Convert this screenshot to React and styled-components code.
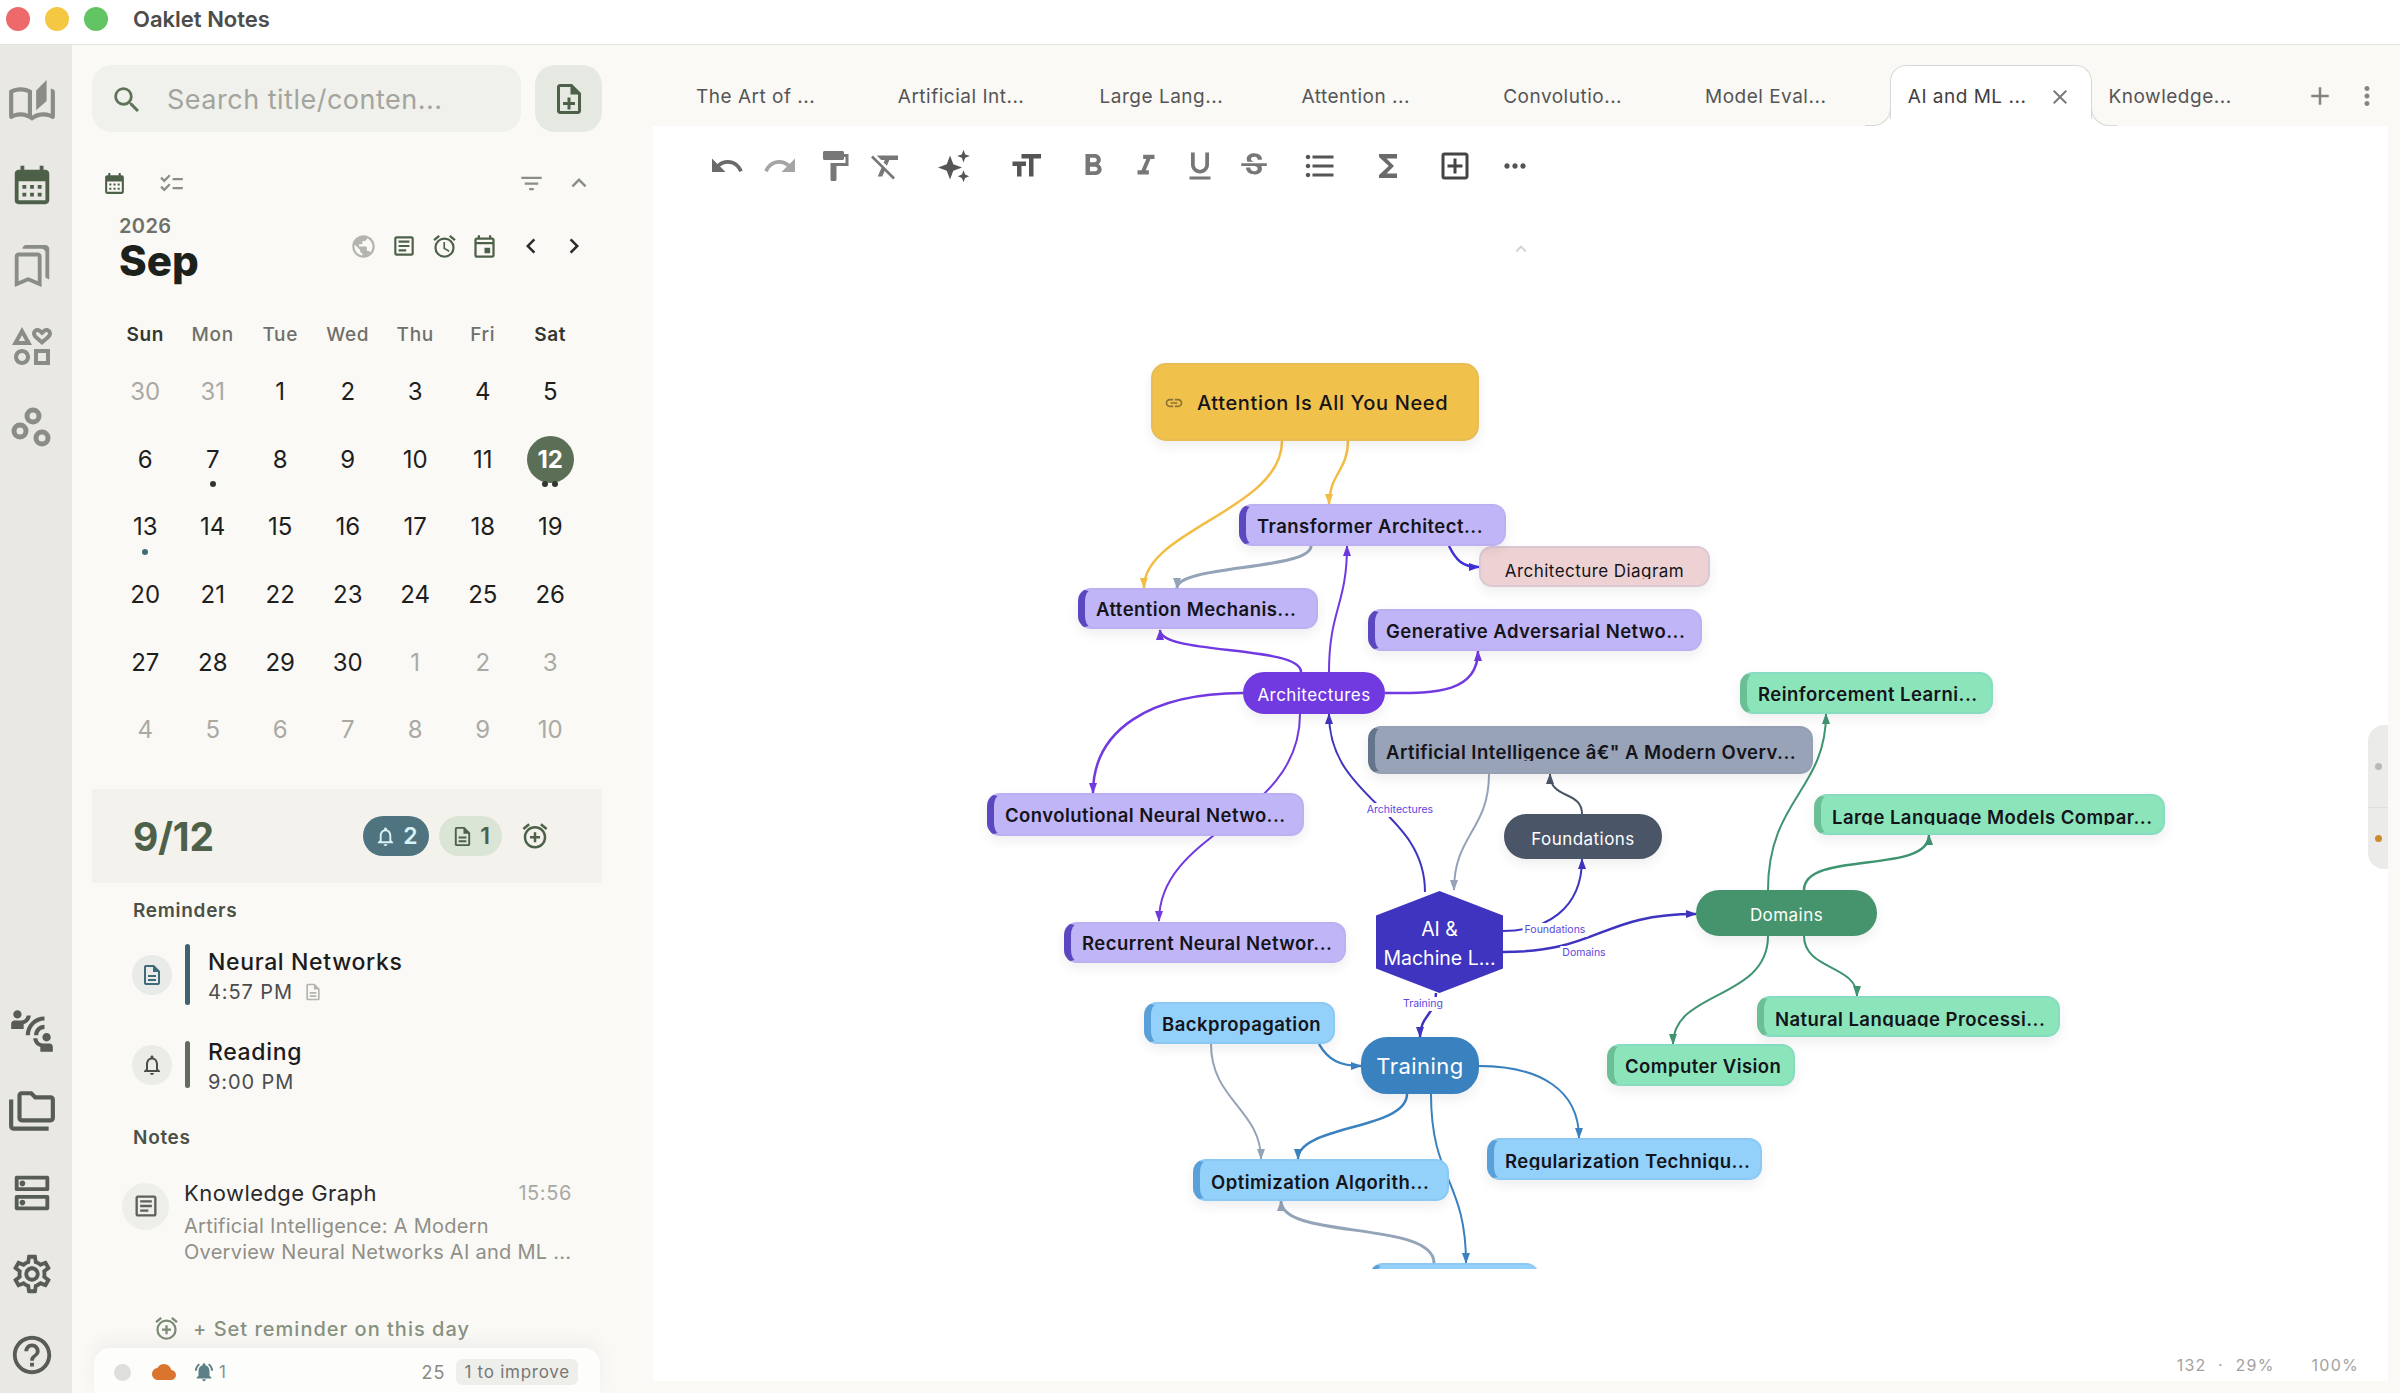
import React from 'react'
import styled, { createGlobalStyle } from 'styled-components'
import {
  MdAdd, MdCalendarMonth, MdChecklist, MdChevronLeft, MdChevronRight, MdClose, MdCloud,
  MdConnectWithoutContact, MdFilterList, MdFormatBold, MdFormatClear, MdFormatItalic,
  MdFormatListBulleted, MdFormatPaint, MdFormatSize, MdFormatUnderlined, MdFunctions,
  MdKeyboardArrowUp, MdLink, MdMoreHoriz, MdMoreVert, MdNotificationsActive, MdOutlineAddBox,
  MdOutlineAlarm, MdOutlineAlarmAdd, MdOutlineArticle, MdOutlineAutoStories, MdOutlineBookmarks,
  MdOutlineDescription, MdOutlineDns, MdOutlineEvent, MdOutlineFolderCopy,
  MdOutlineHelpOutline, MdOutlineInterests, MdOutlineNoteAdd, MdOutlineNotifications,
  MdOutlineSettings, MdPublic, MdRedo, MdSearch, MdStrikethroughS, MdUndo,
} from 'react-icons/md'

const GlobalStyle = createGlobalStyle`
  html, body {
    margin: 0;
    height: 100%;
    background: #faf9f6;
  }
  * {
    box-sizing: border-box;
  }
  body {
    font-family: Inter, "Liberation Sans", sans-serif;
  }
`

const Window = styled.div`
  display: flex;
  flex-direction: column;
  width: 2400px;
  height: 1393px;
  overflow: hidden;
`

const TitleBar = styled.header`
  display: flex;
  align-items: center;
  height: 45px;
  padding: 0 0 7px 6px;
  background: #fff;
  border-bottom: 1px solid #e2e2e0;
`

const Light = styled.span`
  width: 24px;
  height: 24px;
  margin-right: 15px;
  border-radius: 50%;
  background: ${props => props.$color};
`

const AppName = styled.div`
  margin-left: 10px;
  font-size: 22px;
  font-weight: 600;
  color: #4c4c4a;
`

const Body = styled.div`
  display: flex;
  flex: 1;
  min-height: 0;
`

const Rail = styled.nav`
  display: flex;
  flex-direction: column;
  justify-content: space-between;
  width: 72px;
  margin-bottom: -2px;
  padding: 18px 8px 0 0;
  background: #e9e8e4;
`

const RailGroup = styled.div`
  display: flex;
  flex-direction: column;
`

const RailItem = styled.div`
  display: flex;
  align-items: center;
  justify-content: center;
  height: 81px;
  font-size: ${props => props.$size || 46}px;
  color: ${props => props.$color};
`

const Panel = styled.aside`
  flex: none;
  width: 581px;
  padding: 20px 0 0 20px;
  overflow: hidden;
`

const PanelInner = styled.div`
  width: 510px;
`

const SearchRow = styled.div`
  display: flex;
  gap: 14px;
  height: 67px;
`

const SearchBox = styled.div`
  display: flex;
  flex: 1;
  align-items: center;
  gap: 23px;
  padding: 2px 0 0 18px;
  font-size: 27px;
  letter-spacing: 0.5px;
  color: #a3a49d;
  background: #f0f1ec;
  border-radius: 20px;
  svg {
    flex: none;
    font-size: 34px;
    color: #5f7359;
  }
`

const NewButton = styled.div`
  display: flex;
  align-items: center;
  justify-content: center;
  width: 67px;
  font-size: 36px;
  color: #4d6148;
  background: #e6e8e2;
  border-radius: 20px;
`

const CalTools = styled.div`
  display: flex;
  align-items: center;
  height: 30px;
  margin-top: 36px;
  padding: 0 8px 0 10px;
  color: #8a8c86;
`

const ToolIcon = styled.span`
  display: flex;
  margin-right: ${props => props.$mr || 0}px;
  margin-left: ${props => (props.$push ? 'auto' : '0')};
  font-size: ${props => props.$size}px;
  color: ${props => props.$color || 'inherit'};
`

const MonthHead = styled.div`
  display: flex;
  align-items: center;
  margin-top: 15px;
  padding: 0 13px 0 27px;
`

const MonthTitle = styled.div`
  flex: 1;
`

const MonthTools = styled.div`
  display: flex;
  align-items: center;
  padding-bottom: 6px;
`

const Year = styled.div`
  padding-top: 1px;
  font-size: 20px;
  font-weight: 600;
  line-height: 24px;
  letter-spacing: 0.4px;
  color: #6f706a;
`

const Month = styled.div`
  height: 47px;
  font-size: 42px;
  font-weight: 800;
  line-height: 46px;
  color: #1c211c;
`

const CalGrid = styled.div`
  display: grid;
  grid-template-columns: repeat(7, 67.5px);
  width: 473px;
  margin: 34px 0 0 19.5px;
`

const WeekDay = styled.div`
  height: 39px;
  padding-top: 3px;
  font-size: 19px;
  font-weight: ${props => (props.$strong ? 600 : 500)};
  line-height: 26px;
  letter-spacing: 0.7px;
  text-align: center;
  color: ${props => (props.$strong ? '#33362f' : '#6f706a')};
`

const DayCell = styled.div`
  position: relative;
  display: flex;
  align-items: center;
  justify-content: center;
  height: 67.6px;
  font-size: 24px;
  color: ${props => (props.$muted ? '#aaaaa4' : '#1e1e1e')};
`

const Today = styled.span`
  display: flex;
  align-items: center;
  justify-content: center;
  width: 47px;
  height: 47px;
  font-weight: 700;
  color: #fff;
  background: #5a6f55;
  border-radius: 50%;
`

const Dots = styled.div`
  position: absolute;
  top: calc(50% + 22px);
  left: 0;
  right: 0;
  display: flex;
  justify-content: center;
  gap: 4px;
`

const Dot = styled.i`
  width: 6px;
  height: 6px;
  border-radius: 50%;
  background: ${props => props.$color};
`

const DayBanner = styled.section`
  display: flex;
  align-items: center;
  height: 94px;
  margin-top: 25px;
  padding: 1px 52px 0 41px;
  background: #f3f2ed;
`

const DayTitle = styled.div`
  flex: 1;
  font-size: 39px;
  font-weight: 700;
  letter-spacing: -0.3px;
  color: #4d6148;
`

const CountPill = styled.div`
  display: flex;
  align-items: center;
  justify-content: center;
  gap: 6px;
  width: ${props => props.$w}px;
  height: 40px;
  margin-right: ${props => props.$mr}px;
  font-size: 23px;
  font-weight: 600;
  color: ${props => props.$fg};
  background: ${props => props.$bg};
  border-radius: 20px;
`

const SectionLabel = styled.h3`
  margin: ${props => props.$top}px 0 0 41px;
  font-size: 19px;
  font-weight: 600;
  line-height: 24px;
  letter-spacing: 0.7px;
  color: #4a5048;
`

const ReminderList = styled.div`
  display: flex;
  flex-direction: column;
  gap: 30px;
  margin: 22px 0 0 40px;
`

const Reminder = styled.div`
  display: flex;
  align-items: center;
  height: 60px;
`

const RoundIcon = styled.span`
  display: flex;
  align-items: center;
  justify-content: center;
  flex: none;
  width: ${props => props.$d}px;
  height: ${props => props.$d}px;
  font-size: ${props => props.$size}px;
  color: ${props => props.$color};
  background: ${props => props.$bg};
  border-radius: 50%;
`

const Bar = styled.span`
  flex: none;
  width: 5px;
  height: ${props => props.$h}px;
  margin: 0 18px 0 13px;
  background: ${props => props.$color};
  border-radius: 3px;
`

const ReminderText = styled.div`
  padding-top: 2px;
`

const ReminderTitle = styled.div`
  font-size: 23px;
  font-weight: 500;
  line-height: 32px;
  letter-spacing: 0.65px;
  color: #1c1c1c;
`

const ReminderTime = styled.div`
  display: flex;
  align-items: center;
  gap: 10px;
  font-size: 20px;
  line-height: 28px;
  letter-spacing: 0.9px;
  color: #4c4c4c;
  svg {
    font-size: 20px;
    color: #b5b5b0;
  }
`

const NoteRow = styled.div`
  display: flex;
  gap: 15px;
  margin: 28px 0 0 30px;
`

const NoteIcon = styled(RoundIcon)`
  margin-top: 5px;
`

const NoteBody = styled.div`
  width: 388px;
`

const NoteHead = styled.div`
  display: flex;
  justify-content: space-between;
  align-items: center;
  height: 30px;
  font-size: 22px;
  letter-spacing: 0.45px;
  color: #2a2a2a;
`

const NoteTime = styled.span`
  font-size: 20px;
  letter-spacing: 0.6px;
  color: #a9a9a3;
`

const NoteText = styled.p`
  margin: 5px 0 0;
  font-size: 20px;
  line-height: 26px;
  letter-spacing: 0.26px;
  white-space: nowrap;
  color: #8f8f88;
`

const SetReminder = styled.div`
  display: flex;
  align-items: center;
  gap: 13px;
  height: 24px;
  margin: 52px 0 0 61px;
  font-size: 20px;
  font-weight: 500;
  letter-spacing: 1px;
  color: #869180;
  svg {
    font-size: 27px;
    color: #7a8a74;
  }
`

const StatusBar = styled.footer`
  display: flex;
  align-items: center;
  width: 506px;
  height: 46px;
  margin: 7px 0 0 2px;
  padding: 3px 22px 0 20px;
  font-size: 18px;
  color: #8a8a85;
  background: #fdfdfb;
  border-radius: 16px 16px 0 0;
  box-shadow: 0 -6px 16px rgba(120, 120, 110, 0.08);
`

const StatusDot = styled.span`
  width: 17px;
  height: 17px;
  margin-right: 21px;
  background: #dededc;
  border-radius: 50%;
`

const StatusCount = styled.span`
  display: flex;
  align-items: center;
  gap: 4px;
  margin-left: 17px;
  font-size: 17px;
  color: #7d9098;
  svg {
    font-size: 22px;
    color: #5d8088;
  }
`

const Improve = styled.span`
  height: 26px;
  margin-left: 11px;
  padding: 0 8px;
  font-size: 17px;
  line-height: 26px;
  letter-spacing: 0.75px;
  color: #777;
  background: #eeeeea;
  border-radius: 6px;
`

const Score = styled.span`
  margin-left: auto;
  letter-spacing: 1px;
`

const Main = styled.main`
  display: flex;
  flex: 1;
  flex-direction: column;
  min-width: 0;
  padding: 0 12px 12px 0;
`

const TabBar = styled.div`
  display: flex;
  align-items: flex-end;
  height: 81px;
  padding-left: 26px;
`

const Tab = styled.div`
  position: relative;
  display: flex;
  align-items: center;
  justify-content: space-between;
  width: 201.8px;
  height: 61px;
  padding: 1px 19px 0 17px;
  font-size: 19px;
  letter-spacing: 0.5px;
  color: ${props => (props.$active ? '#3f3f3f' : '#555')};
  ${props => props.$active && `
    z-index: 1;
    background: #fff;
    border: 1px solid #d8d8d6;
    border-bottom: 0;
    border-radius: 16px 16px 0 0;
    &::before, &::after {
      content: '';
      position: absolute;
      bottom: 0;
      width: 25px;
      height: 18px;
      border-bottom: 1px solid #d8d8d6;
    }
    &::before {
      left: -26px;
      border-right: 1px solid #d8d8d6;
      border-bottom-right-radius: 18px;
      box-shadow: 12px 12px 0 #fff;
    }
    &::after {
      right: -26px;
      border-left: 1px solid #d8d8d6;
      border-bottom-left-radius: 18px;
      box-shadow: -12px 12px 0 #fff;
    }
  `}
  svg {
    flex: none;
    font-size: 24px;
    color: #7a7a7a;
  }
`

const TabActions = styled.div`
  display: flex;
  align-items: center;
  height: 61px;
  margin-left: 12px;
  font-size: 30px;
  color: #85857f;
  svg:last-child {
    margin-left: 17px;
  }
`

const Editor = styled.div`
  position: relative;
  display: flex;
  flex: 1;
  flex-direction: column;
  min-height: 0;
  background: #fff;
`

const Toolbar = styled.div`
  display: flex;
  align-items: center;
  height: 80px;
  padding-left: 56px;
`

const ToolButton = styled.span`
  display: flex;
  align-items: center;
  justify-content: center;
  flex: none;
  width: 36px;
  margin-left: ${props => props.$ml}px;
  font-size: ${props => props.$size || 34}px;
  color: ${props => props.$color || '#6a6a6a'};
`

const CaretRow = styled.div`
  display: flex;
  align-items: center;
  height: 86px;
  padding-left: 857px;
  font-size: 22px;
  color: #d2d2d0;
`

const Canvas = styled.div`
  position: relative;
  flex: none;
  height: 977px;
  overflow: hidden;
`

const Edges = styled.svg`
  position: absolute;
  top: 0;
  left: 0;
`

const Node = styled.div`
  position: absolute;
  left: ${props => props.$x - OX}px;
  top: ${props => props.$y - OY}px;
  display: flex;
  align-items: center;
  justify-content: ${props => (props.$hub ? 'center' : 'flex-start')};
  width: ${props => props.$w}px;
  height: ${props => props.$h}px;
  padding-top: ${props => props.$pt ?? 2}px;
  padding-left: ${props => (props.$hub ? 0 : 11)}px;
  font-size: ${props => props.$font || 18.5}px;
  font-weight: ${props => props.$weight || 600};
  letter-spacing: ${props => props.$track || 0.45}px;
  white-space: nowrap;
  color: ${props => props.$fg || '#14141a'};
  background: ${props => props.$bg};
  border: 2px solid ${props => props.$line || props.$bg};
  border-left: ${props => (props.$bar ? `7px solid ${props.$bar}` : `2px solid ${props.$line || props.$bg}`)};
  border-radius: ${props => props.$radius || 13}px;
  box-shadow: 0 5px 12px rgba(40, 40, 60, 0.08);
`

const NodeLabel = styled.span`
  display: block;
  overflow: hidden;
  height: ${props => (props.$clip ? '1.06em' : 'auto')};
  line-height: ${props => (props.$clip ? '1.2' : '1.3')};
`

const Hexagon = styled.div`
  position: absolute;
  left: ${1376 - 653}px;
  top: ${891 - 292}px;
  display: flex;
  flex-direction: column;
  align-items: center;
  justify-content: center;
  width: 127px;
  height: 102px;
  padding-top: 3px;
  font-size: 19.5px;
  line-height: 29px;
  color: #fff;
  background: #3f34bf;
  clip-path: polygon(50% 0, 100% 24%, 100% 76%, 50% 100%, 0 76%, 0 24%);
`

const EdgeLabel = styled.span`
  position: absolute;
  left: ${props => props.$x - OX}px;
  top: ${props => props.$y - OY}px;
  padding: 0 2px;
  font-size: 10.5px;
  line-height: 14px;
  white-space: nowrap;
  color: #5b46e0;
  background: #fff;
  transform: translate(-50%, -50%);
`

const ZoomInfo = styled.div`
  display: flex;
  justify-content: flex-end;
  gap: 37px;
  margin-top: auto;
  padding: 0 29px 6px 0;
  font-size: 16px;
  letter-spacing: 1.25px;
  color: #a2a2a0;
`

const SideTabs = styled.div`
  position: absolute;
  top: ${725 - 126}px;
  right: 0;
  display: flex;
  flex-direction: column;
  width: 20px;
  height: 144px;
  background: #ebebe9;
  border-radius: 16px 0 0 16px;
`

const SideTab = styled.div`
  display: flex;
  align-items: center;
  justify-content: center;
  height: ${props => props.$h}px;
  & + & {
    border-top: 1px solid #dddddb;
  }
`

const SideDot = styled.i`
  width: 7px;
  height: 7px;
  background: ${props => props.$color};
  border-radius: 50%;
`

// canvas origin in page coordinates, node and edge data below is in page pixels
const OX = 653
const OY = 292

const LEAF = {
  purple: { $bg: '#c0b5f7', $line: '#bdb0f2', $bar: '#5b48c0' },
  slate: { $bg: '#98a3b8', $line: '#95a0b5', $bar: '#64748b' },
  green: { $bg: '#8ce5ba', $line: '#86dcc0', $bar: '#6bbf94' },
  blue: { $bg: '#93d1fa', $line: '#8cc8f4', $bar: '#5aa0d8' },
}

const leaves = [
  { label: 'Transformer Architect...', x: 1239, y: 504, w: 267, h: 42, kind: 'purple' },
  { label: 'Attention Mechanis...', x: 1078, y: 588, w: 240, h: 41, kind: 'purple' },
  { label: 'Generative Adversarial Netwo...', x: 1368, y: 609, w: 334, h: 42, kind: 'purple' },
  { label: 'Convolutional Neural Netwo...', x: 987, y: 793, w: 317, h: 43, kind: 'purple' },
  { label: 'Recurrent Neural Networ...', x: 1064, y: 922, w: 282, h: 41, kind: 'purple' },
  { label: 'Artificial Intelligence â€" A Modern Overv...', x: 1368, y: 726, w: 445, h: 48, kind: 'slate', clip: true },
  { label: 'Reinforcement Learni...', x: 1740, y: 672, w: 253, h: 42, kind: 'green' },
  { label: 'Large Language Models Compar...', x: 1814, y: 794, w: 351, h: 41, kind: 'green', clip: true },
  { label: 'Natural Language Processi...', x: 1757, y: 996, w: 303, h: 41, kind: 'green', clip: true },
  { label: 'Computer Vision', x: 1607, y: 1044, w: 188, h: 42, kind: 'green' },
  { label: 'Backpropagation', x: 1144, y: 1002, w: 191, h: 42, kind: 'blue' },
  { label: 'Regularization Techniqu...', x: 1487, y: 1138, w: 275, h: 42, kind: 'blue', clip: true },
  { label: 'Optimization Algorith...', x: 1193, y: 1159, w: 256, h: 42, kind: 'blue', clip: true },
  { label: '', x: 1370, y: 1263, w: 169, h: 42, kind: 'blue' },
]

const hubs = [
  { label: 'Architectures', x: 1243, y: 672, w: 142, h: 42, bg: '#7139e0', font: 17, radius: 22, pt: 4 },
  { label: 'Foundations', x: 1504, y: 814, w: 158, h: 45, bg: '#4a5568', font: 17, radius: 23, pt: 4 },
  { label: 'Domains', x: 1696, y: 890, w: 181, h: 46, bg: '#45946e', font: 17, radius: 23, pt: 4 },
  { label: 'Training', x: 1361, y: 1037, w: 118, h: 57, bg: '#3a81c0', font: 22, radius: 26, pt: 0 },
]

const YELLOW = '#f3bd45'
const GRAY = '#94a3b8'
const VIOLET = '#7139e0'
const INDIGO = '#3f34bf'
const SLATE = '#4a5568'
const GREEN = '#3f9470'
const BLUE = '#3a81c0'

const edges = [
  ['M1282 441C1282 510 1143 530 1144 588', YELLOW, 2.5],
  ['M1348 441C1348 470 1329 475 1329 504', YELLOW, 2.5],
  ['M1311 546C1311 570 1177 565 1177 588', GRAY, 3],
  ['M1449 546C1456 560 1462 567 1479 567', '#3f2fd8', 2.5],
  ['M1301 672C1301 645 1160 655 1160 630', VIOLET, 2.5],
  ['M1329 672C1329 610 1347 605 1347 546', VIOLET],
  ['M1385 693C1430 693 1478 695 1478 651', VIOLET, 2.5],
  ['M1243 693C1150 693 1093 730 1093 793', VIOLET, 2.5],
  ['M1300 714C1300 820 1159 830 1159 921', VIOLET],
  ['M1425 892C1425 810 1329 800 1329 714', INDIGO],
  ['M1489 774C1489 830 1454 835 1454 890', GRAY],
  ['M1582 814C1582 790 1550 800 1550 774', SLATE],
  ['M1503 931C1545 931 1582 910 1582 859', INDIGO],
  ['M1503 952C1600 952 1600 914 1696 914', INDIGO, 2.5],
  ['M1436 993C1436 1015 1420 1015 1420 1037', INDIGO, 2.5],
  ['M1319 1044C1328 1060 1340 1066 1361 1066', BLUE, 2.5],
  ['M1211 1044C1211 1100 1261 1110 1261 1159', GRAY],
  ['M1407 1094C1407 1130 1298 1125 1298 1159', BLUE, 2.5],
  ['M1431 1094C1431 1180 1466 1180 1466 1263', BLUE],
  ['M1479 1066C1540 1066 1579 1090 1579 1138', BLUE],
  ['M1434 1263C1434 1220 1281 1240 1281 1201', GRAY, 3],
  ['M1768 890C1768 800 1826 790 1826 714', GREEN],
  ['M1804 890C1804 850 1929 875 1929 835', GREEN, 2.5],
  ['M1768 936C1768 1000 1673 990 1673 1044', GREEN],
  ['M1804 936C1804 970 1857 965 1857 996', GREEN],
]

const edgeColors = [YELLOW, GRAY, VIOLET, INDIGO, SLATE, GREEN, BLUE, '#3f2fd8']

const edgeLabels = [
  ['Architectures', 1400, 810],
  ['Foundations', 1555, 930],
  ['Domains', 1584, 953],
  ['Training', 1423, 1004],
]

const Sparkles = () => (
  <svg width="34" height="34" viewBox="0 0 24 24" fill="currentColor">
    <path d="M8.5 4.5L10.8 10.7L17 13L10.8 15.3L8.5 21.5L6.2 15.3L0 13L6.2 10.7Z" />
    <path d="M18 .5L19.2 3.8L22.5 5L19.2 6.2L18 9.5L16.8 6.2L13.5 5L16.8 3.8Z" />
    <path d="M18 15L19.1 18L22 19.2L19.1 20.4L18 23.5L16.9 20.4L14 19.2L16.9 18Z" />
  </svg>
)

const Bubbles = () => (
  <svg width="46" height="46" viewBox="0 0 46 46" fill="none" stroke="currentColor" strokeWidth="5">
    <circle cx="24" cy="11" r="6" />
    <circle cx="11" cy="26" r="6" />
    <circle cx="33" cy="33" r="6" />
  </svg>
)

const tools = [
  [MdUndo, 0, 38, '#6a6a6a'],
  [MdRedo, 17, 38, '#a5a5a5'],
  [MdFormatPaint, 19, 36, '#777'],
  [MdFormatClear, 15, 36, '#777'],
  [Sparkles, 33, 0, '#555'],
  [MdFormatSize, 35, 36, '#555'],
  [MdFormatBold, 31, 36, '#777'],
  [MdFormatItalic, 17, 34, '#777'],
  [MdFormatUnderlined, 18, 36, '#777'],
  [MdStrikethroughS, 18, 34, '#777'],
  [MdFormatListBulleted, 30, 36, '#555'],
  [MdFunctions, 32, 36, '#6a6a6a'],
  [MdOutlineAddBox, 31, 36, '#444'],
  [MdMoreHoriz, 24, 32, '#555'],
]

const tabs = ['The Art of ...', 'Artificial Int...', 'Large Lang...', 'Attention ...', 'Convolutio...', 'Model Eval...', 'AI and ML ...', 'Knowledge...']

const weekdays = ['Sun', 'Mon', 'Tue', 'Wed', 'Thu', 'Fri', 'Sat']

const before = [30, 31]
const after = [1, 2, 3, 4, 5, 6, 7, 8, 9, 10]
const days = [
  ...before.map(d => ({ d, muted: true })),
  ...Array.from({ length: 30 }, (_, i) => ({ d: i + 1 })),
  ...after.map(d => ({ d, muted: true })),
]
const dayDots = { 7: ['#33362f'], 12: ['#33362f', '#33362f'], 13: ['#3f6a78'] }

const Calendar = () => (
  <CalGrid>
    {weekdays.map(w => (
      <WeekDay key={w} $strong={w === 'Sun' || w === 'Sat'}>{w}</WeekDay>
    ))}
    {days.map((day, i) => (
      <DayCell key={i} $muted={day.muted}>
        {!day.muted && day.d === 12 ? <Today>12</Today> : day.d}
        {!day.muted && dayDots[day.d] && (
          <Dots>
            {dayDots[day.d].map((c, j) => <Dot key={j} $color={c} />)}
          </Dots>
        )}
      </DayCell>
    ))}
  </CalGrid>
)

const Sidebar = () => (
  <Panel>
    <PanelInner>
      <SearchRow>
        <SearchBox><MdSearch />Search title/conten...</SearchBox>
        <NewButton><MdOutlineNoteAdd /></NewButton>
      </SearchRow>
      <CalTools>
        <ToolIcon $size={25} $mr={31} $color="#4d6148"><MdCalendarMonth /></ToolIcon>
        <ToolIcon $size={27}><MdChecklist /></ToolIcon>
        <ToolIcon $size={27} $push $mr={19}><MdFilterList /></ToolIcon>
        <ToolIcon $size={30}><MdKeyboardArrowUp /></ToolIcon>
      </CalTools>
      <MonthHead>
        <MonthTitle>
          <Year>2026</Year>
          <Month>Sep</Month>
        </MonthTitle>
        <MonthTools>
          <ToolIcon $size={27} $mr={14} $color="#b3b3af"><MdPublic /></ToolIcon>
          <ToolIcon $size={26} $mr={14} $color="#4d6148"><MdOutlineArticle /></ToolIcon>
          <ToolIcon $size={27} $mr={13} $color="#4d6148"><MdOutlineAlarm /></ToolIcon>
          <ToolIcon $size={27} $mr={18} $color="#4d6148"><MdOutlineEvent /></ToolIcon>
          <ToolIcon $size={30} $mr={13} $color="#2a2a2a"><MdChevronLeft /></ToolIcon>
          <ToolIcon $size={30} $color="#2a2a2a"><MdChevronRight /></ToolIcon>
        </MonthTools>
      </MonthHead>
      <Calendar />
      <DayBanner>
        <DayTitle>9/12</DayTitle>
        <CountPill $w={66} $mr={10} $bg="#4f7480" $fg="#d8f2f5"><MdOutlineNotifications />2</CountPill>
        <CountPill $w={63} $mr={18} $bg="#dbe5d6" $fg="#4d6148"><MdOutlineDescription />1</CountPill>
        <ToolIcon $size={30} $color="#4d6148"><MdOutlineAlarmAdd /></ToolIcon>
      </DayBanner>
      <SectionLabel $top={16}>Reminders</SectionLabel>
      <ReminderList>
        <Reminder>
          <RoundIcon $d={40} $size={24} $color="#3f6a78" $bg="#e9ebe8"><MdOutlineDescription /></RoundIcon>
          <Bar $h={61} $color="#3d6470" />
          <ReminderText>
            <ReminderTitle>Neural Networks</ReminderTitle>
            <ReminderTime>4:57 PM <MdOutlineDescription /></ReminderTime>
          </ReminderText>
        </Reminder>
        <Reminder>
          <RoundIcon $d={40} $size={24} $color="#4a5048" $bg="#ebebe7"><MdOutlineNotifications /></RoundIcon>
          <Bar $h={47} $color="#636b5d" />
          <ReminderText>
            <ReminderTitle>Reading</ReminderTitle>
            <ReminderTime>9:00 PM</ReminderTime>
          </ReminderText>
        </Reminder>
      </ReminderList>
      <SectionLabel $top={31}>Notes</SectionLabel>
      <NoteRow>
        <NoteIcon $d={47} $size={28} $color="#5f5f5c" $bg="#eeeeeb"><MdOutlineArticle /></NoteIcon>
        <NoteBody>
          <NoteHead>Knowledge Graph<NoteTime>15:56</NoteTime></NoteHead>
          <NoteText>Artificial Intelligence: A Modern<br />Overview Neural Networks AI and ML ...</NoteText>
        </NoteBody>
      </NoteRow>
      <SetReminder><MdOutlineAlarmAdd />+ Set reminder on this day</SetReminder>
      <StatusBar>
        <StatusDot />
        <ToolIcon $size={24} $color="#d9752e"><MdCloud /></ToolIcon>
        <StatusCount><MdNotificationsActive />1</StatusCount>
        <Score>25</Score>
        <Improve>1 to improve</Improve>
      </StatusBar>
    </PanelInner>
  </Panel>
)

const MindMap = () => (
  <Canvas>
    <Edges width="1735" height="977" viewBox={`${OX} ${OY} 1735 977`} fill="none">
      <defs>
        {edgeColors.map(c => (
          <marker key={c} id={`arrow-${c.slice(1)}`} markerUnits="userSpaceOnUse" markerWidth="11" markerHeight="9" refX="10" refY="4.5" orient="auto">
            <path d="M0 .5L11 4.5L0 8.5Z" fill={c} />
          </marker>
        ))}
      </defs>
      {edges.map(([d, c, w]) => (
        <path key={d} d={d} stroke={c} strokeWidth={w || 2} markerEnd={`url(#arrow-${c.slice(1)})`} />
      ))}
    </Edges>
    <Node $x={1151} $y={363} $w={328} $h={78} $bg="#f0c14b" $line="#e8bd55" $font={20} $weight={500} $radius={15} $track={0.63}>
      <ToolIcon $size={20} $mr={13} $color="#8a7434"><MdLink /></ToolIcon>
      <NodeLabel>Attention Is All You Need</NodeLabel>
    </Node>
    <Node $x={1479} $y={546} $w={231} $h={41} $bg="#eed2d3" $line="#dcc7d4" $font={17} $weight={400} $pt={7} $hub>
      <NodeLabel $clip>Architecture Diagram</NodeLabel>
    </Node>
    {leaves.map(n => (
      <Node key={n.x} $x={n.x} $y={n.y} $w={n.w} $h={n.h} {...LEAF[n.kind]}>
        <NodeLabel $clip={n.clip}>{n.label}</NodeLabel>
      </Node>
    ))}
    {hubs.map(n => (
      <Node key={n.x} $x={n.x} $y={n.y} $w={n.w} $h={n.h} $bg={n.bg} $fg="#fff" $font={n.font} $weight={400} $radius={n.radius} $pt={n.pt} $hub>
        {n.label}
      </Node>
    ))}
    <Hexagon>
      <span>AI &amp;</span>
      <span>Machine L...</span>
    </Hexagon>
    {edgeLabels.map(([t, x, y]) => (
      <EdgeLabel key={t} $x={x} $y={y}>{t}</EdgeLabel>
    ))}
  </Canvas>
)

const Workspace = () => (
  <Main>
    <TabBar>
      {tabs.map((t, i) => (
        <Tab key={t} $active={i === 6}>
          {t}
          {i === 6 && <MdClose />}
        </Tab>
      ))}
      <TabActions><MdAdd /><MdMoreVert /></TabActions>
    </TabBar>
    <Editor>
      <Toolbar>
        {tools.map(([Icon, ml, size, color], i) => (
          <ToolButton key={i} $ml={ml} $color={color}>
            {size ? <Icon size={size} /> : <Icon />}
          </ToolButton>
        ))}
      </Toolbar>
      <CaretRow><MdKeyboardArrowUp /></CaretRow>
      <MindMap />
      <ZoomInfo>
        <span>132 &nbsp;·&nbsp; 29%</span>
        <span>100%</span>
      </ZoomInfo>
      <SideTabs>
        <SideTab $h={82}><SideDot $color="#b9b9b6" /></SideTab>
        <SideTab $h={62}><SideDot $color="#d08a2e" /></SideTab>
      </SideTabs>
    </Editor>
  </Main>
)

const App = () => (
  <Window>
    <GlobalStyle />
    <TitleBar>
      <Light $color="#ee6a6a" />
      <Light $color="#f4c842" />
      <Light $color="#62c462" />
      <AppName>Oaklet Notes</AppName>
    </TitleBar>
    <Body>
      <Rail>
        <RailGroup>
          <RailItem $color="#8a8c86" $size={50}><MdOutlineAutoStories /></RailItem>
          <RailItem $color="#4d6148"><MdCalendarMonth /></RailItem>
          <RailItem $color="#8a8c86"><MdOutlineBookmarks /></RailItem>
          <RailItem $color="#8a8c86" $size={48}><MdOutlineInterests /></RailItem>
          <RailItem $color="#8a8c86"><Bubbles /></RailItem>
        </RailGroup>
        <RailGroup>
          <RailItem $color="#585c56" $size={50}><MdConnectWithoutContact /></RailItem>
          <RailItem $color="#585c56" $size={50}><MdOutlineFolderCopy /></RailItem>
          <RailItem $color="#585c56"><MdOutlineDns /></RailItem>
          <RailItem $color="#585c56"><MdOutlineSettings /></RailItem>
          <RailItem $color="#585c56"><MdOutlineHelpOutline /></RailItem>
        </RailGroup>
      </Rail>
      <Sidebar />
      <Workspace />
    </Body>
  </Window>
)

export default App
